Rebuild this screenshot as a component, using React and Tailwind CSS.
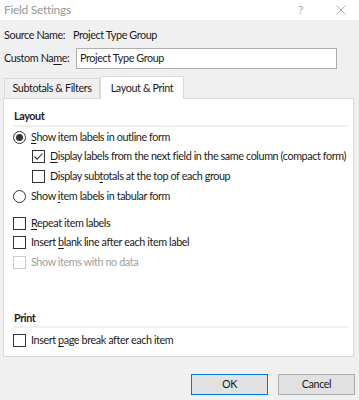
import React from "react";

const font = { fontFamily: "Lato, 'Noto Sans', sans-serif" };

function U({ children }) {
  return <span className="underline underline-offset-2">{children}</span>;
}

function Radio({ checked }) {
  return (
    <span className="w-[13px] h-[13px] rounded-full border border-[#333333] bg-white flex items-center justify-center shrink-0">
      {checked && <span className="w-[7px] h-[7px] rounded-full bg-[#333333]" />}
    </span>
  );
}

function Check({ checked, disabled }) {
  return (
    <span
      className={
        "w-[13px] h-[13px] border bg-white flex items-center justify-center shrink-0 " +
        (disabled ? "border-[#cccccc]" : "border-[#333333]")
      }
    >
      {checked && (
        <svg width="11" height="11" viewBox="0 0 11 11">
          <path d="M1.5 5.5 L4.2 8.2 L9.5 2.5" fill="none" stroke="#333333" strokeWidth="1.1" />
        </svg>
      )}
    </span>
  );
}

function Row({ h, mt, ml, children, gray }) {
  return (
    <div
      className={
        "flex items-center gap-[5px] text-[10.8px] tracking-[-0.4px] whitespace-nowrap " +
        (gray ? "text-[#a0a0a0]" : "text-[#1a1a1a]")
      }
      style={{ height: h, marginTop: mt || 0, marginLeft: ml }}
    >
      {children}
    </div>
  );
}

export default function App() {
  return (
    <div
      className="w-[359px] h-[400px] bg-[#f0f0f0] flex flex-col overflow-hidden whitespace-nowrap tracking-[-0.4px]"
      style={font}
    >
      <div className="h-[20px] bg-white flex items-center pl-[4px] pr-[13px] text-[12px] tracking-[-0.3px] text-[#999999]">
        <span className="flex-1">Field Settings</span>
        <span className="text-[12px] text-[#aaaaaa] mr-[33px]">?</span>
        <svg width="10" height="10" viewBox="0 0 10 10">
          <path d="M0.5 0.5 L9.5 9.5 M9.5 0.5 L0.5 9.5" stroke="#999999" strokeWidth="0.8" />
        </svg>
      </div>

      <div className="flex items-center h-[14px] mt-[8px] pl-[4px] text-[10.8px] text-[#1a1a1a]">
        <span className="w-[69px]">Source Name:</span>
        <span>Project Type Group</span>
      </div>

      <div className="flex items-center h-[21px] mt-[6px] pl-[4px] text-[10.8px] text-[#1a1a1a]">
        <span className="w-[72px]">
          Custom Na<U>m</U>e:
        </span>
        <div className="w-[261px] h-[21px] border border-[#adadad] bg-white flex items-center pl-[3px]">
          Project Type Group
        </div>
      </div>

      <div className="flex items-end h-[22px] mt-[7px] pl-[4px] text-[10.8px] text-[#1a1a1a]">
        <div className="w-[96px] h-[20px] border border-b-0 border-[#d9d9d9] flex items-center justify-center">
          Subtotals &amp; Filters
        </div>
        <div className="w-[84px] h-[23px] -mb-[1px] border border-b-0 border-[#d9d9d9] bg-white flex items-center justify-center relative z-10">
          Layout &amp; Print
        </div>
      </div>

      <div className="ml-[3px] w-[351px] h-[259px] border border-[#d9d9d9] bg-white pt-[9px] flex flex-col">
        <div className="ml-[10px] h-[16px] flex items-center text-[10.8px] font-bold text-[#1a1a1a]">Layout</div>
        <div className="ml-[9px] mr-[5px] mt-[1px] h-[2px] bg-[#f0f0f0]" />
        <Row h={20} ml={9}>
          <Radio checked />
          <span>
            <U>S</U>how item labels in outline form
          </span>
        </Row>
        <Row h={19} ml={28}>
          <Check checked />
          <span>
            <U>D</U>isplay labels from the next field in the same column (compact form)
          </span>
        </Row>
        <Row h={20} ml={28}>
          <Check />
          <span>
            Display sub<U>t</U>otals at the top of each group
          </span>
        </Row>
        <Row h={20} ml={9}>
          <Radio />
          <span>
            Show <U>i</U>tem labels in tabular form
          </span>
        </Row>
        <Row h={20} mt={7} ml={9}>
          <Check />
          <span>
            <U>R</U>epeat item labels
          </span>
        </Row>
        <Row h={19} ml={9}>
          <Check />
          <span>
            Insert <U>b</U>lank line after each item label
          </span>
        </Row>
        <Row h={20} ml={9} gray>
          <Check disabled />
          <span>Show items with no data</span>
        </Row>
        <div className="ml-[10px] mt-[38px] h-[16px] flex items-center text-[10.8px] font-bold text-[#1a1a1a]">Print</div>
        <div className="ml-[9px] mr-[5px] h-[2px] bg-[#f0f0f0]" />
        <Row h={20} mt={2} ml={9}>
          <Check />
          <span>
            Insert <U>p</U>age break after each item
          </span>
        </Row>
      </div>

      <div className="flex justify-end gap-[10px] mt-[17px] pr-[4px] text-[10.8px] text-[#1a1a1a]">
        <div className="w-[77px] h-[21px] border border-[#0078d7] bg-[#e1e1e1] flex items-center justify-center">OK</div>
        <div className="w-[77px] h-[21px] border border-[#adadad] bg-[#e1e1e1] flex items-center justify-center">Cancel</div>
      </div>
    </div>
  );
}
